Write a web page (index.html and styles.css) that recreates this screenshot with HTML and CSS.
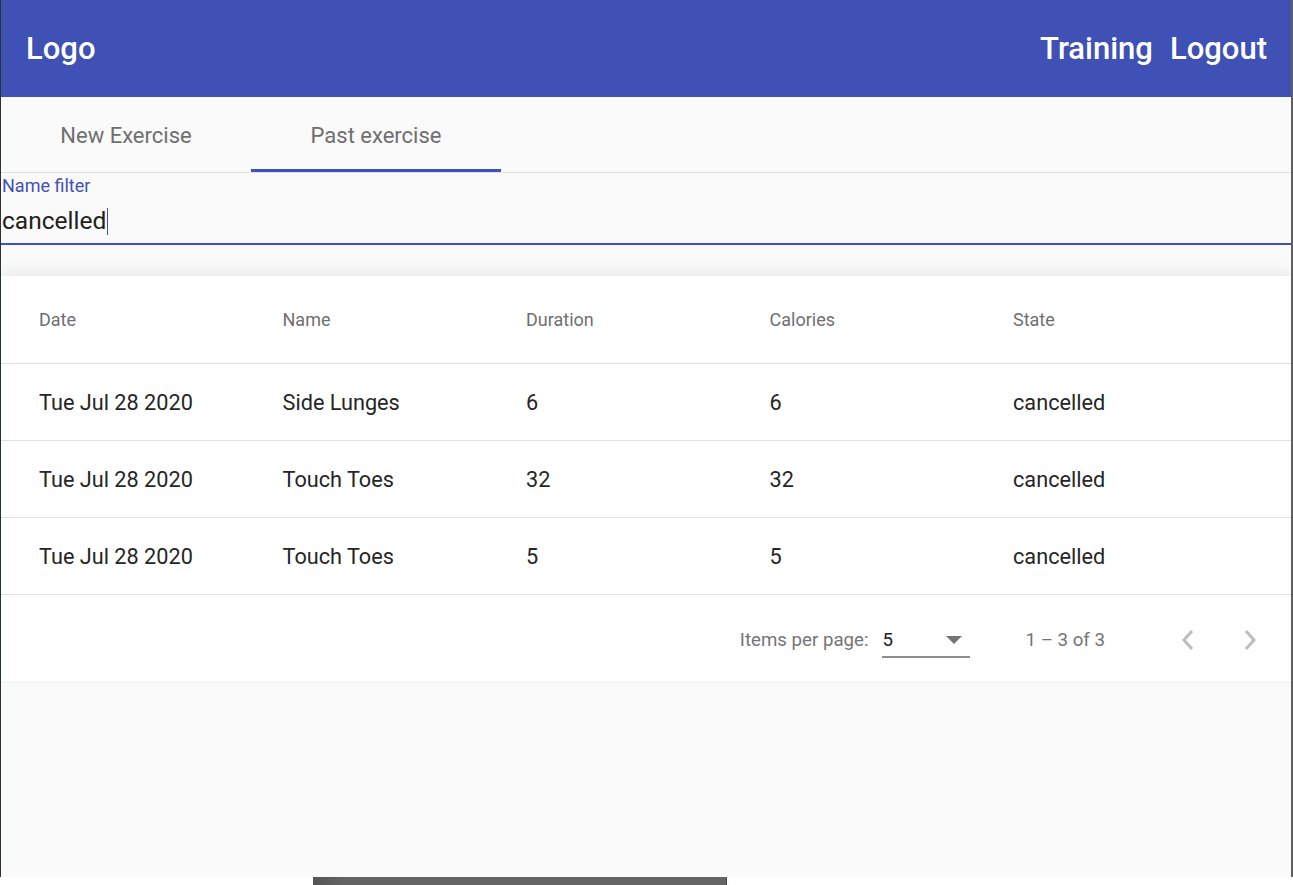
FILE: index.html
```html
<!DOCTYPE html>
<html>
<head>
<meta charset="utf-8">
<link rel="stylesheet" href="styles.css">
</head>
<body>
<div class="window">
  <header class="toolbar">
    <span class="logo">Logo</span>
    <nav class="nav">
      <a class="nav-link">Training</a>
      <a class="nav-link">Logout</a>
    </nav>
  </header>
  <div class="tabs">
    <div class="tab">New Exercise</div>
    <div class="tab active">Past exercise</div>
  </div>
  <div class="filter">
    <div class="filter-label">Name filter</div>
    <div class="filter-input">cancelled<span class="caret"></span></div>
  </div>
  <div class="card">
    <div class="row head">
      <div class="cell">Date</div>
      <div class="cell">Name</div>
      <div class="cell">Duration</div>
      <div class="cell">Calories</div>
      <div class="cell">State</div>
    </div>
    <div class="row">
      <div class="cell">Tue Jul 28 2020</div>
      <div class="cell">Side Lunges</div>
      <div class="cell">6</div>
      <div class="cell">6</div>
      <div class="cell">cancelled</div>
    </div>
    <div class="row">
      <div class="cell">Tue Jul 28 2020</div>
      <div class="cell">Touch Toes</div>
      <div class="cell">32</div>
      <div class="cell">32</div>
      <div class="cell">cancelled</div>
    </div>
    <div class="row">
      <div class="cell">Tue Jul 28 2020</div>
      <div class="cell">Touch Toes</div>
      <div class="cell">5</div>
      <div class="cell">5</div>
      <div class="cell">cancelled</div>
    </div>
    <div class="paginator">
      <span class="pg-label">Items per page:</span>
      <div class="pg-select">
        <span class="pg-value">5</span>
        <svg class="pg-arrow" width="16" height="8" viewBox="0 0 16 8"><path d="M0 0h16L8 8z" fill="#757575"/></svg>
      </div>
      <span class="pg-range">1 – 3 of 3</span>
      <div class="pg-buttons">
        <svg class="pg-btn" width="14" height="22" viewBox="0 0 14 22"><path d="M11 2L3 11l8 9" fill="none" stroke="#bdbdbd" stroke-width="3"/></svg>
        <svg class="pg-btn" width="14" height="22" viewBox="0 0 14 22"><path d="M3 2l8 9-8 9" fill="none" stroke="#bdbdbd" stroke-width="3"/></svg>
      </div>
    </div>
  </div>
</div>
<div class="taskbar"><div class="taskbar-bar"></div></div>
</body>
</html>
```
FILE: styles.css
```css
html, body {
  margin: 0;
  padding: 0;
  background: #ffffff;
  font-family: Roboto, "Liberation Sans", sans-serif;
}
.window {
  height: 877px;
  box-sizing: border-box;
  border-left: 1px solid #263238;
  border-right: 2px solid #5f5f5f;
  background: #fafafa;
  display: flex;
  flex-direction: column;
  overflow: hidden;
}
.toolbar {
  height: 97px;
  flex: none;
  background: #3f51b5;
  color: #ffffff;
  display: flex;
  align-items: center;
  justify-content: space-between;
  padding: 0 24px 0 25px;
  font-weight: 500;
  font-size: 31px;
}
.nav {
  display: flex;
  gap: 17px;
}
.tabs {
  height: 75px;
  flex: none;
  display: flex;
  border-bottom: 1px solid #e0e0e0;
}
.tab {
  width: 250px;
  display: flex;
  align-items: center;
  justify-content: center;
  font-size: 22px;
  font-weight: 400;
  color: #6f6f6f;
  box-sizing: border-box;
  padding-top: 2px;
}
.tab.active {
  border-bottom: 3px solid #3f51b5;
  padding-top: 5px;
}
.filter {
  height: 72px;
  flex: none;
  box-sizing: border-box;
  border-bottom: 2px solid #3f51b5;
  padding: 2px 0 0 1px;
}
.filter-label {
  font-size: 18px;
  color: #3f51b5;
  line-height: 22px;
}
.filter-input {
  font-size: 24.5px;
  color: #212121;
  line-height: 32px;
  margin-top: 8px;
  display: flex;
  align-items: center;
}
.caret {
  display: inline-block;
  width: 1px;
  height: 27px;
  background: #3f51b5;
  margin-left: 1px;
}
.card {
  margin-top: 31px;
  background: #ffffff;
  box-shadow: 0 -4px 14px rgba(0,0,0,0.07);
}
.row {
  display: grid;
  grid-template-columns: repeat(5, 243.5px);
  padding-left: 38px;
  height: 76px;
  border-bottom: 1px solid #e0e0e0;
  align-items: center;
  font-size: 21.7px;
  color: #262626;
}
.row.head {
  height: 87px;
  font-size: 18px;
  font-weight: 400;
  color: #6f6f6f;
}
.paginator {
  height: 86px;
  display: flex;
  align-items: center;
  justify-content: flex-end;
  font-size: 18.7px;
  color: #757575;
  padding-right: 34px;
  padding-top: 3px;
  box-sizing: border-box;
}
.pg-label {
  margin-right: 13px;
}
.pg-select {
  width: 88px;
  height: 34px;
  box-sizing: border-box;
  border-bottom: 2px solid #8e8e8e;
  display: flex;
  align-items: center;
  justify-content: space-between;
  padding: 0 8px 0 1px;
  margin-top: 2px;
  color: #212121;
}
.pg-range {
  margin-left: 56px;
  margin-right: 76px;
}
.pg-buttons {
  display: flex;
  gap: 48px;
}
.pg-btn {
  display: block;
}
.taskbar {
  height: 8px;
  padding-left: 313px;
}
.taskbar-bar {
  width: 413px;
  height: 8px;
  background: linear-gradient(90deg, #555 0, #636363 30px, #646464 100%);
  border-right: 1px solid #3a4a4a;
}
```
